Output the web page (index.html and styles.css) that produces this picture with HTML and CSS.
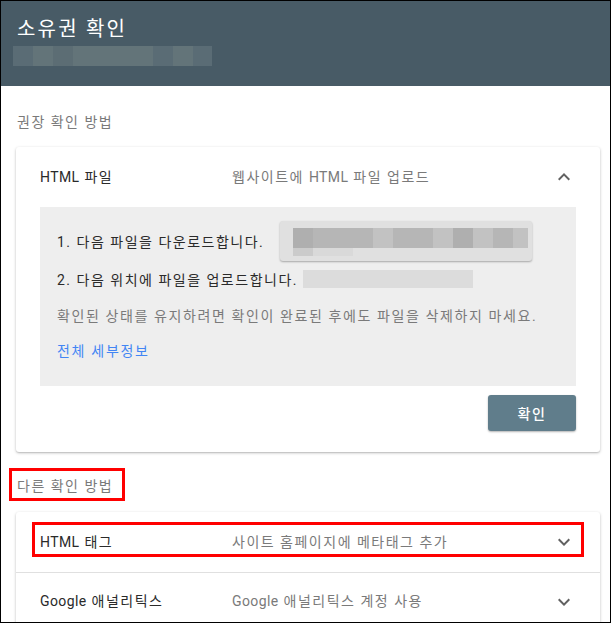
FILE: index.html
```html
<!DOCTYPE html>
<html lang="ko">
<head>
<meta charset="utf-8">
<link rel="stylesheet" href="styles.css">
</head>
<body>
<div class="page">
  <header class="hdr">
    <h1 class="title">소유권 확인</h1>
    <div class="blur blur-hdr">
      <span class="h1"></span><span class="h2"></span><span class="h3"></span><span class="h2"></span><span class="h2"></span><span class="h2"></span><span class="h2"></span><span class="h1"></span><span class="h2"></span><span class="h1"></span>
    </div>
  </header>
  <main class="main">
    <div class="section-label">권장 확인 방법</div>
    <section class="card">
      <div class="row">
        <div class="row-name"><span class="lat">HTML</span> 파일</div>
        <div class="row-desc">웹사이트에 <span class="lat">HTML</span> 파일 업로드</div>
        <svg class="chev" width="24" height="24" viewBox="0 0 24 24"><path d="M7.4 15.4L12 10.8l4.6 4.6L18 14l-6-6-6 6z" fill="#616161"/></svg>
      </div>
      <div class="panel">
        <div class="step">
          <span>1. 다음 파일을 다운로드합니다.</span>
          <div class="dl-btn">
            <div class="px-row">
              <span class="g1"></span><span class="g2"></span><span class="g2"></span><span class="g2"></span><span class="g3"></span><span class="g2"></span><span class="g2"></span><span class="g3"></span><span class="g1"></span><span class="g3"></span><span class="g2"></span><span class="g3 last"></span>
            </div>
            <div class="px-row2"><span class="s1"></span><span class="s2"></span></div>
          </div>
        </div>
        <div class="step step2">
          <span>2. 다음 위치에 파일을 업로드합니다.</span>
          <div class="blur-url"></div>
        </div>
        <p class="note">확인된 상태를 유지하려면 확인이 완료된 후에도 파일을 삭제하지 마세요.</p>
        <a class="link">전체 세부정보</a>
      </div>
      <div class="actions"><button class="btn">확인</button></div>
    </section>
    <div class="section-label other"><span>다른 확인 방법</span><i class="hl hl-label"></i></div>
    <section class="card card2">
      <div class="row">
        <div class="row-name"><span class="lat">HTML</span> 태그</div>
        <div class="row-desc">사이트 홈페이지에 메타태그 추가</div>
        <svg class="chev" width="24" height="24" viewBox="0 0 24 24"><path d="M7.4 8.6L12 13.2l4.6-4.6L18 10l-6 6-6-6z" fill="#616161"/></svg>
        <i class="hl hl-row"></i>
      </div>
      <div class="row divided">
        <div class="row-name"><span class="lat">Google</span> 애널리틱스</div>
        <div class="row-desc"><span class="lat">Google</span> 애널리틱스 계정 사용</div>
        <svg class="chev" width="24" height="24" viewBox="0 0 24 24"><path d="M7.4 8.6L12 13.2l4.6-4.6L18 10l-6 6-6-6z" fill="#616161"/></svg>
      </div>
    </section>
  </main>
</div>
</body>
</html>
```
FILE: styles.css
```css
* { box-sizing: border-box; }
html, body { margin: 0; padding: 0; background: #fff; }
body { font-family: Roboto, "Noto Sans CJK KR", sans-serif; color: #2a2a2a; letter-spacing: 1.5px; }
.lat { letter-spacing: 0.4px; }
.page {
  width: 611px; height: 623px; border: 1px solid #000; overflow: hidden;
  position: relative; background: #fff;
}
.hdr {
  background: #485b66; height: 85px; padding: 14px 0 0 16px;
}
.title {
  margin: 0; font-size: 20px; font-weight: 400; color: #fff; line-height: 28px; letter-spacing: 2.2px;
}
.blur { display: flex; }
.blur-hdr { margin: 3px 0 0 -4px; height: 20px; width: 199px; }
.blur-hdr span { width: 20px; height: 20px; }
.blur-hdr .h1 { background: #5a6c75; }
.blur-hdr .h2 { background: #637479; }
.blur-hdr .h3 { background: #5c6d74; }
.blur-hdr span:last-child { width: 19px; }
.main { padding: 0 10px 0 15px; }
.section-label {
  font-size: 14px; color: #7a7a7a; height: 61px; padding-top: 26px; line-height: 20px; padding-left: 1px;
}
.card {
  background: #fff; border-radius: 3px;
  box-shadow: 0 1px 3px rgba(0,0,0,0.25), 0 1px 1px rgba(0,0,0,0.08);
  padding: 0 24px 21px;
}
.row {
  display: flex; align-items: center; height: 60px; font-size: 14px; position: relative; padding-bottom: 3px;
}
.row-name { width: 192px; color: #2a2a2a; }
.row-desc { flex: 1; color: #7a7a7a; }
.chev { margin-top: 3px; }
.panel {
  background: #eeeeee; height: 179px; padding: 13px 17px 0;
}
.step { display: flex; align-items: center; font-size: 14px; color: #2a2a2a; height: 41px; }
.dl-btn {
  margin-left: 16px; width: 252px; height: 40px; background: #e0e0e0; border-radius: 3px;
  box-shadow: 0 1px 2px rgba(0,0,0,0.3); padding: 7px 0 0 13px;
}
.px-row { display: flex; height: 20px; }
.px-row span { width: 20px; height: 20px; }
.px-row .last { width: 15px; }
.g1 { background: #afafaf; }
.g2 { background: #b6b6b6; }
.g3 { background: #c2c2c2; }
.px-row2 { display: flex; height: 8px; }
.px-row2 .s1 { width: 20px; background: #cbcbcb; }
.px-row2 .s2 { width: 40px; background: #d9d9d9; }
.step2 { margin-top: -2px; height: 40px; }
.blur-url { margin-left: 5px; width: 170px; height: 18px; background: #dcdcdc; }
.note { margin: 7px 0 0; font-size: 14px; color: #7a7a7a; line-height: 20px; letter-spacing: 1.6px; }
.link { display: block; margin-top: 15px; font-size: 14px; color: #4285f4; line-height: 20px; letter-spacing: 1.7px; }
.actions { display: flex; justify-content: flex-end; padding-top: 9px; }
.btn {
  width: 88px; height: 36px; border: 0; border-radius: 3px; background: #607d8b;
  color: #fff; font-family: inherit; font-size: 14px; font-weight: 500; letter-spacing: 1.5px;
  box-shadow: 0 1px 2px rgba(0,0,0,0.3);
}
.other { position: relative; height: 60px; padding-top: 24px; }
.hl { position: absolute; border: 3px solid #ff0000; display: block; }
.hl-label { left: -7px; top: 16px; width: 116px; height: 33px; }
.hl-row { left: -8px; top: 10px; width: 552px; height: 35px; }
.card2 { padding-bottom: 0; }
.divided { border-top: 1px solid #e0e0e0; margin: 0 -24px; padding: 0 24px 6px; height: 61px; }
```
